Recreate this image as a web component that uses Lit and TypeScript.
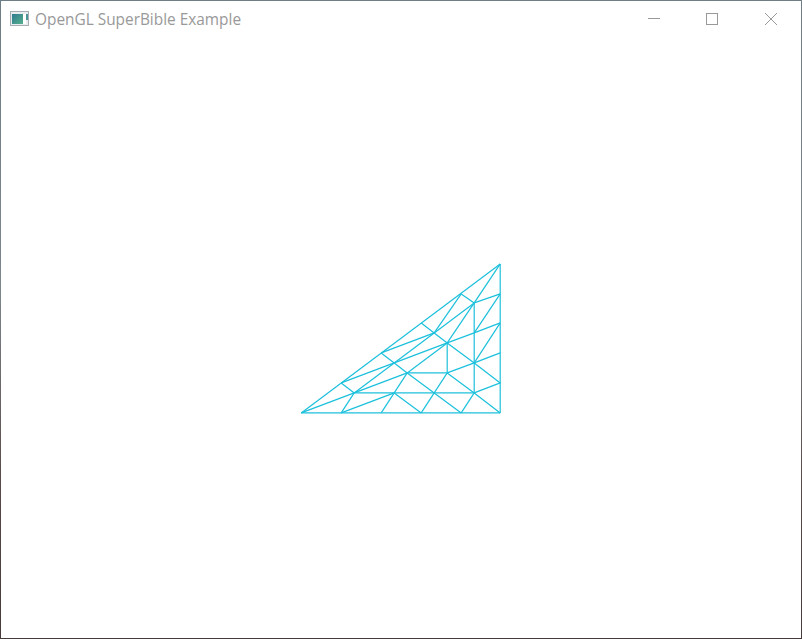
import { LitElement, html, css, svg } from "lit";
import { customElement } from "lit/decorators.js";

type Pt = [number, number];

// outer edge of the tessellated triangle, then the two inner rings
const bottom: Pt[] = [301.5, 341.5, 381.5, 421.5, 461.5, 500.5].map((x) => [x, 412.5] as Pt);
const hyp: Pt[] = [[341.5, 382.5], [381.5, 352.5], [421.5, 322.5], [461.5, 293.5], [500.5, 263.5]];
const right: Pt[] = [[500.5, 382.5], [500.5, 352.5], [500.5, 322.5], [500.5, 293.5]];
const r1b: Pt[] = [[354.5, 392.5], [394.5, 392.5], [434.5, 392.5], [474.5, 392.5]];
const r1h: Pt[] = [[394.5, 362.5], [434.5, 332.5], [474.5, 302.5]];
const r1r: Pt[] = [[474.5, 362.5], [474.5, 332.5]];
const r2: Pt[] = [[407.5, 372.5], [447.5, 372.5], [447.5, 342.5]];

const [a, b, c, d, e, f] = bottom;
const [h1, h2, h3, h4] = hyp;
const [g1, g2, g3, g4] = right;
const [p, q, r, s] = r1b;
const [t, u, v] = r1h;
const [w, x] = r1r;
const [i, j, k] = r2;
const apex = hyp[4];

const edges: [Pt, Pt][] = [
  // outline
  [a, f], [f, apex], [a, apex],
  // ring 1
  [p, s], [s, v], [p, v],
  // ring 2
  [i, j], [j, k], [i, k],
  // outer strip
  [a, p], [b, p], [b, q], [c, q], [d, q], [d, r], [e, r], [e, s], [f, s],
  [g1, s], [g1, w], [g2, w], [g3, w], [g3, x], [g4, x], [g4, v], [apex, v],
  [h4, v], [h4, u], [h3, u], [h2, u], [h2, t], [h1, t], [h1, p],
  // inner strip
  [p, i], [q, i], [r, i], [r, j], [s, j], [w, j], [w, k], [x, k], [v, k], [u, k], [t, k], [t, i],
];

@customElement("app-root")
export class AppRoot extends LitElement {
  static styles = css`
    :host {
      display: block;
      width: 802px;
      height: 639px;
      box-sizing: border-box;
      padding: 1px;
      background: linear-gradient(to bottom, #6d7d86 0, #7d878c 45%, #5b4b4a 75%, #463a3a 100%);
      overflow: hidden;
    }
    .window {
      height: 100%;
      display: flex;
      flex-direction: column;
      background: #fff;
    }
    .titlebar {
      flex: none;
      height: 37px;
      display: flex;
      align-items: flex-start;
    }
    .app-icon {
      flex: none;
      width: 19px;
      height: 15px;
      margin: 10px 6px 0 9px;
    }
    .title {
      flex: 1;
      margin-top: 8px;
      font: 15.4px/22px "Open Sans", sans-serif;
      color: #999;
      white-space: nowrap;
    }
    .controls {
      display: flex;
    }
    .control {
      width: 58px;
      height: 37px;
      box-sizing: border-box;
      padding: 12px 0 0 22px;
    }
    .control.max {
      width: 59px;
    }
    .control svg {
      display: block;
      width: 12px;
      height: 12px;
      fill: none;
      stroke: #999;
      stroke-width: 1;
    }
    .canvas {
      flex: 1;
      min-height: 0;
    }
    .canvas svg {
      display: block;
      width: 800px;
      height: 600px;
    }
    .mesh line {
      stroke: #1cc0dc;
      stroke-width: 1.2;
    }
  `;

  render() {
    return html`
      <div class="window">
        <div class="titlebar">
          <svg class="app-icon" viewBox="0 0 19 15">
            <defs>
              <linearGradient id="ic" x1="0" y1="0" x2="1" y2="1">
                <stop offset="0" stop-color="#2f7a90" />
                <stop offset="1" stop-color="#55b08c" />
              </linearGradient>
            </defs>
            <rect x="0.5" y="0.5" width="18" height="14" fill="#e8ecee" stroke="#a6aeb3" />
            <rect x="2" y="3" width="11" height="10" fill="url(#ic)" />
            <rect x="13" y="3" width="3" height="10" fill="#fff" />
            <rect x="16" y="3" width="2" height="6" fill="#4a949a" />
          </svg>
          <div class="title">OpenGL SuperBible Example</div>
          <div class="controls">
            <div class="control">
              <svg viewBox="0 0 12 12"><path d="M0 5.5H12" /></svg>
            </div>
            <div class="control max">
              <svg viewBox="0 0 12 12"><rect x="0.5" y="0.5" width="11" height="11" /></svg>
            </div>
            <div class="control">
              <svg viewBox="0 0 12 12"><path d="M0 0L12 12M12 0L0 12" /></svg>
            </div>
          </div>
        </div>
        <div class="canvas">
          <svg viewBox="1 38 800 600">
            <g class="mesh" transform="translate(-0.3 0.4)">
              ${edges.map(
                ([m, n]) => svg`<line x1=${m[0]} y1=${m[1]} x2=${n[0]} y2=${n[1]} />`
              )}
            </g>
          </svg>
        </div>
      </div>
    `;
  }
}
